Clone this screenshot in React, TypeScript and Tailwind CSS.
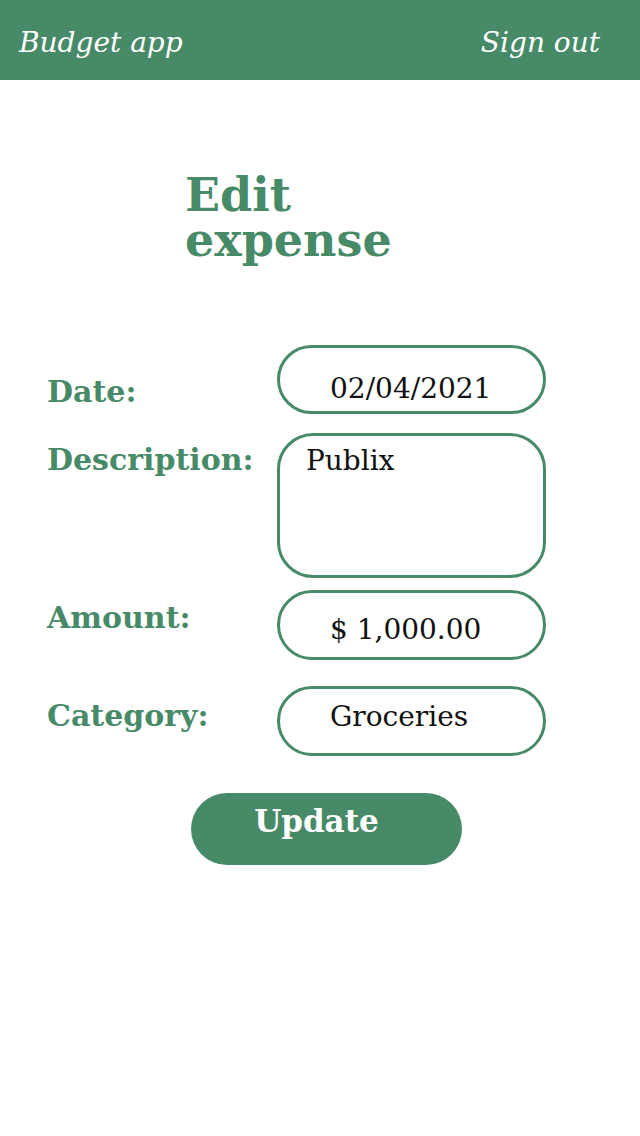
import React from "react";

const serif = { fontFamily: '"DejaVu Serif", "Liberation Serif", serif' };

export default function App() {
  return (
    <div className="min-h-[1136px] w-[640px] bg-white" style={serif}>
      <header className="flex h-[80px] items-center justify-between bg-[#478a68] pl-[19px] pr-[40px] pt-[6px] text-white">
        <span className="text-[28px] italic leading-none">Budget app</span>
        <span className="text-[28px] italic leading-none">Sign out</span>
      </header>

      <h1 className="ml-[185px] mt-[93px] w-[240px] text-[46px] font-bold leading-[45px] text-[#478a68]">
        Edit expense
      </h1>

      <form className="mt-[82px] flex flex-col pl-[47px]">
        <div className="flex items-start">
          <label className="mt-[32px] w-[230px] text-[30px] font-bold leading-none text-[#478a68]">Date:</label>
          <div className="h-[69px] w-[269px] rounded-full border-[3px] border-[#478a68] pl-[50px] pt-[27px] text-[28px] leading-none text-[#111]">
            02/04/2021
          </div>
        </div>
        <div className="mt-[19px] flex items-start">
          <label className="mt-[12px] w-[230px] text-[30px] font-bold leading-none text-[#478a68]">Description:</label>
          <div className="h-[145px] w-[269px] rounded-[36px] border-[3px] border-[#478a68] pl-[26px] pt-[11px] text-[28px] leading-none text-[#111]">
            Publix
          </div>
        </div>
        <div className="mt-[12px] flex items-start">
          <label className="mt-[13px] w-[230px] text-[30px] font-bold leading-none text-[#478a68]">Amount:</label>
          <div className="h-[70px] w-[269px] rounded-full border-[3px] border-[#478a68] pl-[50px] pt-[23px] text-[28px] leading-none text-[#111]">
            $ 1,000.00
          </div>
        </div>
        <div className="mt-[26px] flex items-start">
          <label className="mt-[15px] w-[230px] text-[30px] font-bold leading-none text-[#478a68]">Category:</label>
          <div className="h-[70px] w-[269px] rounded-full border-[3px] border-[#478a68] pl-[50px] pt-[14px] text-[28px] leading-none text-[#111]">
            Groceries
          </div>
        </div>
        <div className="mt-[37px] flex pl-[144px]">
          <button type="button" className="h-[72px] w-[271px] rounded-full bg-[#478a68] pb-[16px] pr-[20px] text-[31px] font-bold text-white">
            Update
          </button>
        </div>
      </form>
    </div>
  );
}
